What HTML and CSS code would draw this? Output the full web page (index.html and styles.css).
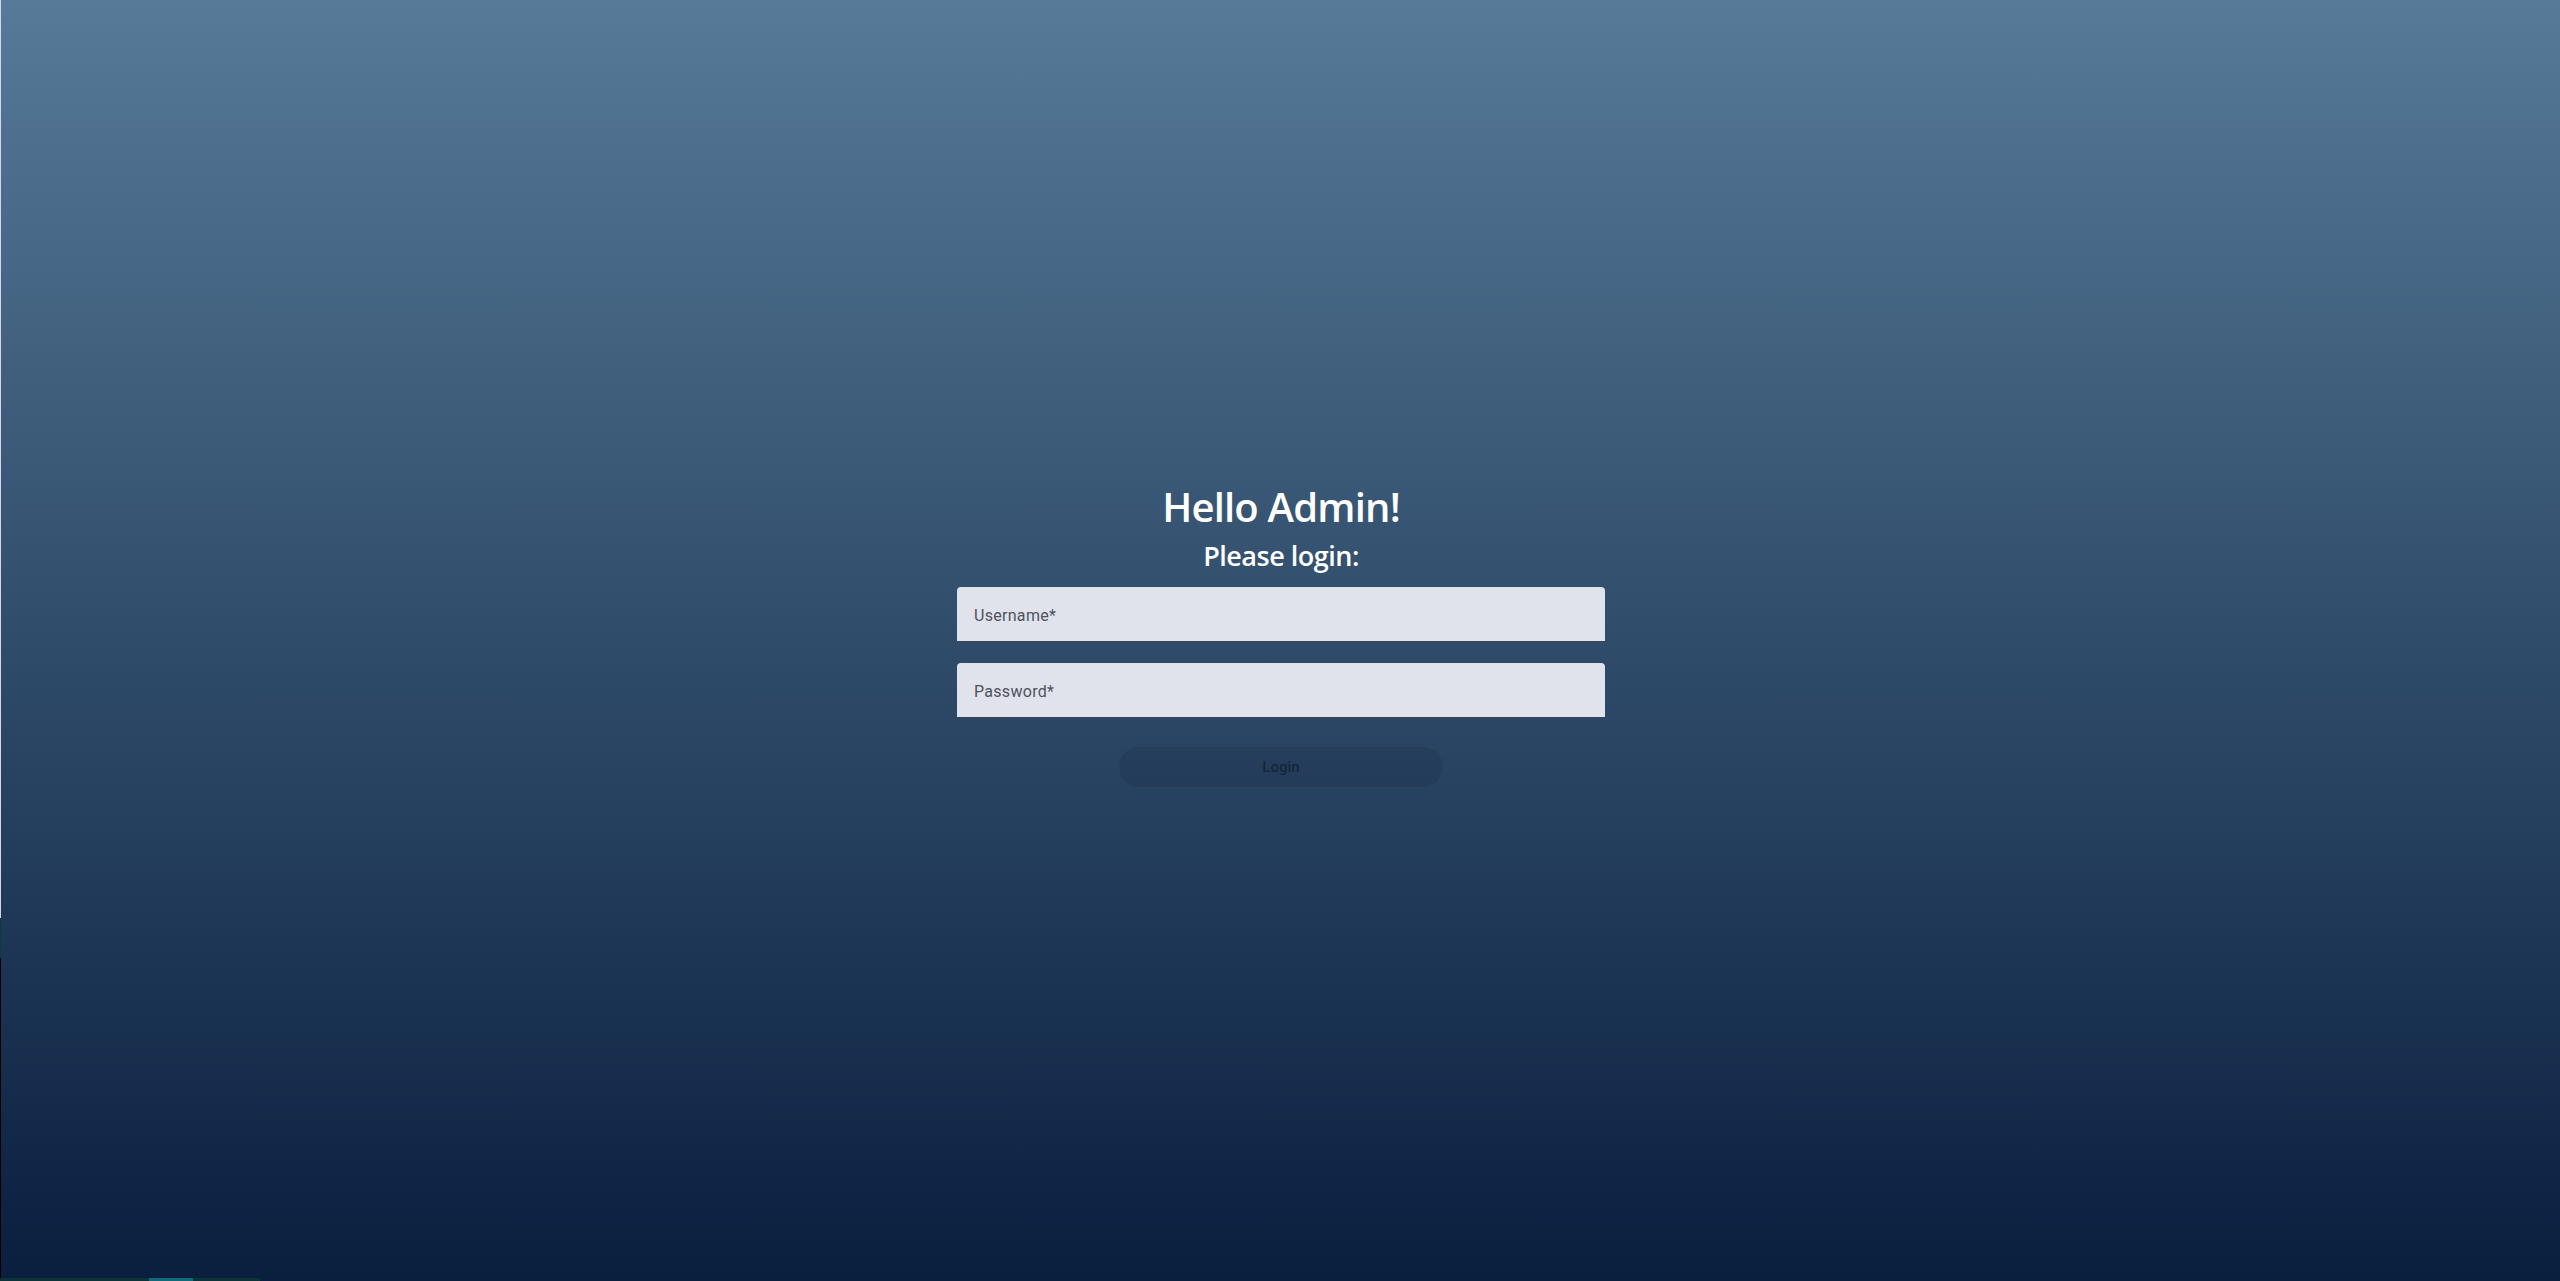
FILE: index.html
```html
<!DOCTYPE html>
<html lang="en">
<head>
<meta charset="utf-8">
<title>Login</title>
<link rel="stylesheet" href="styles.css">
</head>
<body>
<main class="page">
  <form class="login">
    <h1 class="title">Hello Admin!</h1>
    <h2 class="subtitle">Please login:</h2>
    <div class="field">
      <label class="field-label" for="username">Username*</label>
      <input class="field-input" id="username" type="text">
    </div>
    <div class="field">
      <label class="field-label" for="password">Password*</label>
      <input class="field-input" id="password" type="password">
    </div>
    <button class="login-btn" type="button" disabled>Login</button>
  </form>
</main>
<div class="edge-left"></div>
<div class="edge-bottom"><span class="edge-tab"></span></div>
</body>
</html>
```

FILE: styles.css
```css
html, body {
  margin: 0;
  padding: 0;
  height: 100%;
}

body {
  background: linear-gradient(to bottom, #567a98 0%, #0a1e3e 100%);
  font-family: "Open Sans", "Noto Sans", sans-serif;
  overflow: hidden;
  position: relative;
}

.page {
  min-height: 100vh;
  display: flex;
  align-items: center;
  justify-content: center;
}

.login {
  width: 648px;
  display: flex;
  flex-direction: column;
  align-items: center;
  margin-left: 2px;
  padding-bottom: 13px;
}

.title {
  margin: 0;
  color: #ffffff;
  font-size: 40px;
  font-weight: 600;
  letter-spacing: -0.8px;
  line-height: 50px;
}

.subtitle {
  margin: 5px 0 12px 0;
  color: #ffffff;
  font-size: 27px;
  font-weight: 600;
  letter-spacing: -0.5px;
  line-height: 38px;
}

.field {
  position: relative;
  width: 100%;
  margin-bottom: 21px;
}

.field-input {
  display: block;
  width: 100%;
  box-sizing: border-box;
  height: 55px;
  border: none;
  border-bottom: 1px solid #3d4450;
  border-radius: 4px 4px 0 0;
  background: #e0e2ec;
  padding: 0 16px;
  font-family: Roboto, sans-serif;
  font-size: 16px;
  outline: none;
}

.field-label {
  position: absolute;
  left: 17px;
  top: 18px;
  font-family: Roboto, sans-serif;
  font-size: 16px;
  line-height: 22px;
  letter-spacing: 0.3px;
  color: #4e525d;
  pointer-events: none;
}

.login-btn {
  margin-top: 8px;
  width: 324px;
  height: 40px;
  border: none;
  border-radius: 20px;
  background: rgba(0, 0, 0, 0.08);
  color: rgba(10, 22, 40, 0.62);
  font-family: Roboto, sans-serif;
  font-size: 15px;
  font-weight: 500;
}

.edge-left {
  position: absolute;
  left: 0;
  top: 0;
  width: 1px;
  height: 100%;
  background: linear-gradient(to bottom, #d4d8de 0, #d4d8de 918px, #0d3a40 918px, #0d3a40 958px, #000 958px);
}

.edge-bottom {
  position: absolute;
  left: 0;
  bottom: 0;
  width: 260px;
  height: 3px;
  background: #0b3438;
}

.edge-tab {
  position: absolute;
  left: 149px;
  top: 0;
  width: 44px;
  height: 3px;
  background: #0f6a7c;
}
```
